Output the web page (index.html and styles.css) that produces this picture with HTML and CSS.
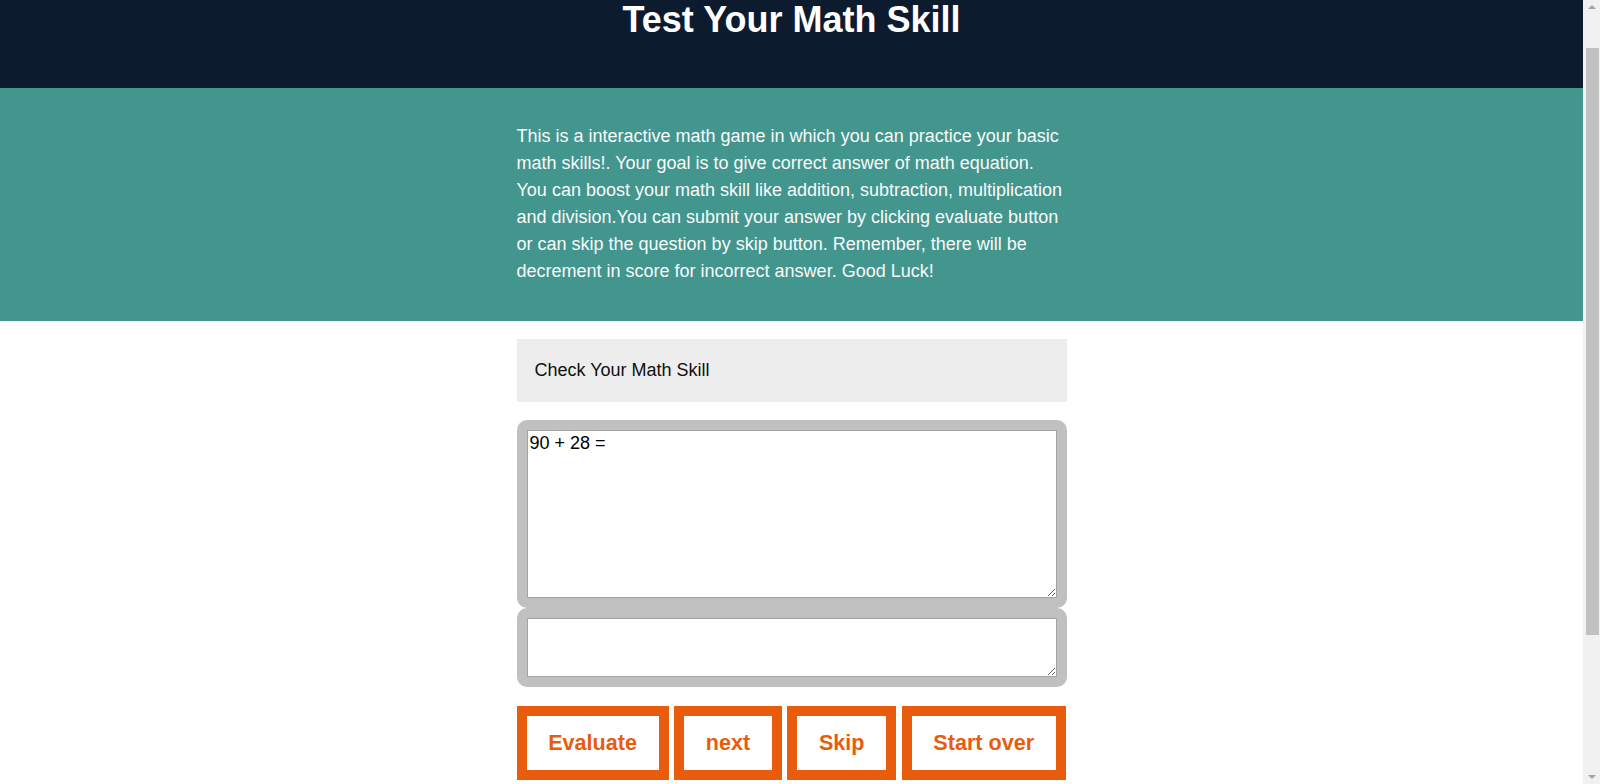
FILE: index.html
```html
<!DOCTYPE html>
<html lang="en">
<head>
<meta charset="utf-8">
<title>Test Your Math Skill</title>
<link rel="stylesheet" href="styles.css">
</head>
<body>
<header class="top">
  <h1 class="title">Test Your Math Skill</h1>
</header>
<section class="intro">
  <p class="intro-text">This is a interactive math game in which you can practice your basic math skills!. Your goal is to give correct answer of math equation. You can boost your math skill like addition, subtraction, multiplication and division.You can submit your answer by clicking evaluate button or can skip the question by skip button. Remember, there will be decrement in score for incorrect answer. Good Luck!</p>
</section>
<main class="game">
  <div class="game-head">Check Your Math Skill</div>
  <div class="field"><textarea class="box box-question">90 + 28 = </textarea></div>
  <div class="field"><textarea class="box box-answer"></textarea></div>
  <div class="actions">
    <button class="btn">Evaluate</button>
    <button class="btn">next</button>
    <button class="btn">Skip</button>
    <button class="btn">Start over</button>
  </div>
</main>
<div class="scrollbar" aria-hidden="true">
  <span class="sb-arrow sb-up"></span>
  <span class="sb-thumb"></span>
  <span class="sb-arrow sb-down"></span>
</div>
</body>
</html>
```
FILE: styles.css
```css
html, body {
  margin: 0;
  padding: 0;
}
body {
  margin-right: 17px;
  font-family: "Liberation Sans", Arial, sans-serif;
  font-size: 18px;
  line-height: 1.5;
  color: #111;
  background: #fff;
}
.top {
  background: #0d1b2e;
  height: 88px;
  overflow: hidden;
}
.title {
  margin: 0;
  padding-top: 1px;
  text-align: center;
  color: #fff;
  font-size: 36px;
  font-weight: bold;
  line-height: 37px;
}
.intro {
  background: #42968e;
  padding: 35px 0 36px;
}
.intro-text {
  width: 550px;
  margin: 0 auto;
  color: #fafafa;
  font-size: 18px;
  line-height: 27px;
}
.game {
  width: 550px;
  margin: 0 auto;
  padding: 18px 0 240px;
}
.game-head {
  background: #ededed;
  padding: 18px;
  line-height: 27px;
  color: #111;
  margin-bottom: 18px;
}
.field {
  background: #c0c0c0;
  border-radius: 10px;
  padding: 10px;
}
.box {
  display: block;
  box-sizing: border-box;
  width: 100%;
  margin: 0;
  padding: 2px;
  border: 1px solid #a3a3a3;
  background: #fff;
  font-family: "Liberation Sans", Arial, sans-serif;
  font-size: 18px;
  color: #000;
}
.box-question {
  height: 168px;
}
.box-answer {
  height: 59px;
}
.actions {
  display: flex;
  gap: 5.4px;
  margin-top: 19px;
}
.btn {
  flex: 0 0 auto;
  white-space: nowrap;
  background: #fff;
  border: 10px solid #e85c0e;
  color: #e85c0e;
  font-family: "Liberation Sans", Arial, sans-serif;
  font-weight: bold;
  font-size: 21.6px;
  line-height: 24px;
  padding: 15px 21.7px;
  margin: 0;
  cursor: pointer;
}

/* imitation of the browser's classic scrollbar */
.scrollbar {
  position: fixed;
  top: 0;
  right: 0;
  width: 17px;
  height: 100vh;
  background: #f1f1f1;
  display: flex;
  flex-direction: column;
  align-items: center;
}
.sb-arrow {
  width: 0;
  height: 0;
  border-left: 4px solid transparent;
  border-right: 4px solid transparent;
}
.sb-up {
  margin-top: 5px;
  border-bottom: 4px solid #a3a3a3;
}
.sb-thumb {
  width: 13px;
  height: 587px;
  margin-top: 39px;
  background: #c1c1c1;
  margin-left: 2px;
}
.sb-down {
  margin-top: auto;
  margin-bottom: 5px;
  border-top: 4px solid #a3a3a3;
}
```
